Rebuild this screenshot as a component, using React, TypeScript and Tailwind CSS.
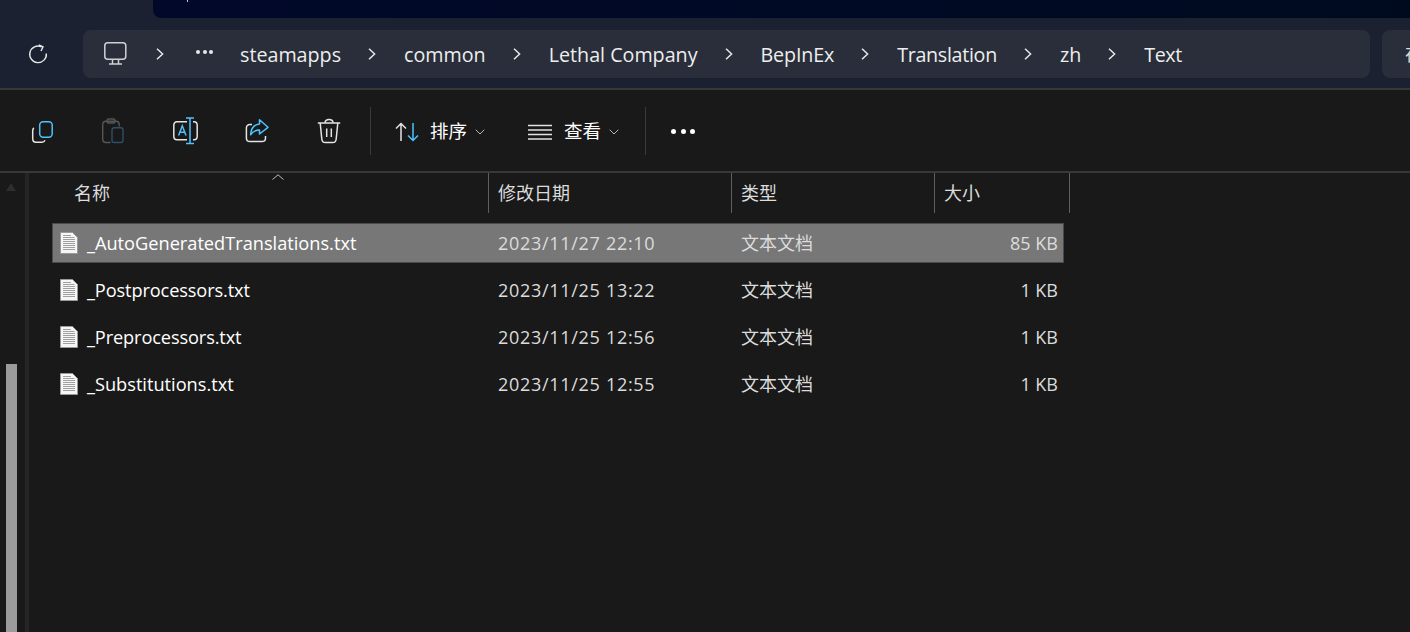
import { ChevronDown } from 'lucide-react';

const crumbs = [
  { label: 'steamapps', tracking: '' },
  { label: 'common', tracking: '' },
  { label: 'Lethal Company', tracking: '' },
  { label: 'BepInEx', tracking: 'tracking-[-0.15px]' },
  { label: 'Translation', tracking: 'tracking-[-0.3px]' },
  { label: 'zh', tracking: '' },
  { label: 'Text', tracking: 'tracking-[-0.4px]' },
];

const files = [
  { name: '_AutoGeneratedTranslations.txt', date: '2023/11/27 22:10', size: '85 KB', selected: true, tracking: '' },
  { name: '_Postprocessors.txt', date: '2023/11/25 13:22', size: '1 KB', selected: false, tracking: 'tracking-[-0.12px]' },
  { name: '_Preprocessors.txt', date: '2023/11/25 12:56', size: '1 KB', selected: false, tracking: 'tracking-[-0.12px]' },
  { name: '_Substitutions.txt', date: '2023/11/25 12:55', size: '1 KB', selected: false, tracking: '' },
];

const BLUE = '#4cc2ff';
const WHITE = '#e4e4e4';

function CopyIcon() {
  return (
    <svg width="24" height="26" viewBox="0 0 24 26" fill="none" strokeWidth="1.5">
      <path d="M5 10 C4 10.5 3.7 11.5 3.7 12.5 V20.5 C3.7 23 5 24.3 7 24.3 H13 C14.5 24.3 15.5 23.5 16 22.3" stroke={WHITE} />
      <rect x="10.7" y="3.7" width="12.5" height="15.5" rx="3.4" stroke={BLUE} />
    </svg>
  );
}

function PasteIcon() {
  return (
    <svg width="24" height="26" viewBox="0 0 24 26" fill="none" strokeWidth="1.4">
      <path d="M9.5 24.5 H5 C3 24.5 1.7 23.2 1.7 21 V6.5 C1.7 4.5 3 3.2 5 3.2 H15 C17 3.2 18.2 4.5 18.2 6.5 V8.5" stroke="#565656" />
      <rect x="6" y="1" width="8" height="4" rx="1.5" stroke="#565656" />
      <rect x="11" y="9.7" width="11" height="14.8" rx="2.2" stroke="#2b5068" />
    </svg>
  );
}

function RenameIcon() {
  return (
    <svg width="26" height="28" viewBox="0 0 26 28" fill="none" strokeWidth="1.5">
      <path d="M15 4.7 H5 C3 4.7 1.8 6.1 1.8 8.2 V19.2 C1.8 21.3 3 22.7 5 22.7 H15" stroke={WHITE} />
      <path d="M21 4.7 H22 C24 4.7 25.2 6.1 25.2 8.2 V19.2 C25.2 21.3 24 22.7 22 22.7 H21" stroke={WHITE} />
      <path d="M14 1 H22 M18 1 V26.5 M14 26.5 H22" stroke={BLUE} />
      <path d="M6.6 18.5 L10.3 8.8 L14 18.5 M7.8 15.3 H12.8" stroke={BLUE} />
    </svg>
  );
}

function ShareIcon() {
  return (
    <svg width="24" height="26" viewBox="0 0 24 26" fill="none" strokeWidth="1.5">
      <path d="M7 6.5 H5 C2.7 6.5 1.4 7.9 1.4 10 V20 C1.4 22.2 2.7 23.6 5 23.6 H17 C19.2 23.6 20.5 22.2 20.5 20 V18" stroke={WHITE} />
      <path d="M14.5 1.8 L23 9.3 L14.5 16 V12 C10.5 12 7.7 13.4 5.6 16.8 C6 10.5 9.5 6.5 14.5 6 Z" stroke={BLUE} strokeLinejoin="round" />
    </svg>
  );
}

function TrashIcon() {
  return (
    <svg width="24" height="26" viewBox="0 0 24 26" fill="none" strokeWidth="1.5" stroke={WHITE}>
      <path d="M.8 5 H23.2" />
      <path d="M8 4.8 C8 2.8 9.7 1.4 12 1.4 C14.3 1.4 16 2.8 16 4.8" />
      <path d="M3.2 5 L4.8 21 C5 23.3 6.3 24.6 8.4 24.6 H15.6 C17.7 24.6 19 23.3 19.2 21 L20.8 5" />
      <path d="M9.7 10.5 V19 M14.3 10.5 V19" />
    </svg>
  );
}

function SortIcon() {
  return (
    <svg width="24" height="20" viewBox="0 0 24 20" fill="none" strokeWidth="1.5">
      <path d="M6 19 V1.5 M1 6.5 L6 1.5 L11 6.5" stroke={WHITE} />
      <path d="M18 1 V18.5 M13 13.5 L18 18.5 L23 13.5" stroke={BLUE} />
    </svg>
  );
}

function ListIcon() {
  return (
    <svg width="24" height="16" viewBox="0 0 24 16" fill="none" strokeWidth="1.3" stroke={WHITE}>
      <path d="M0 1.5 H24 M0 6 H24 M0 10.5 H24 M0 15 H24" />
    </svg>
  );
}

function MonitorIcon() {
  return (
    <svg width="24" height="24" viewBox="0 0 24 24" fill="none" strokeWidth="1.5" stroke="#cfd0d3">
      <rect x=".8" y=".8" width="21" height="16.5" rx="3" />
      <path d="M8.5 17.5 V21.5 M14.5 17.5 V21.5 M5 22 H18" />
    </svg>
  );
}

function RefreshIcon() {
  return (
    <svg width="20" height="20" viewBox="0 0 20 20" fill="none" strokeWidth="1.4" stroke="#e8e8e8">
      <path d="M13.5 2.8 A8.3 8.3 0 1 0 18.3 9.5" />
      <path d="M10.8 1 L15 2.8 L13 7" />
    </svg>
  );
}

function FileIcon() {
  return (
    <svg width="18" height="22" viewBox="0 0 18 22">
      <path d="M.5 .5 H12.5 L17.5 5.5 V21.5 H.5 Z" fill="#f6f6f6" stroke="#9a9a9a" />
      <path d="M3 3.5 H11 M3 5.5 H14.5 M3 7.5 H15 M3 9.5 H15 M3 11.5 H15 M3 13.5 H15 M3 15.5 H15 M3 17.5 H15" stroke="#a0a0a0" strokeWidth="1" />
    </svg>
  );
}

function CrumbChevron({ className }: { className: string }) {
  return (
    <svg width="8" height="12" viewBox="0 0 8 12" fill="none" stroke="#e8e8e8" strokeWidth="1.5" className={className}>
      <path d="M1 .7 L6.6 6 L1 11.3" />
    </svg>
  );
}

function ToolButton({ children }: { children: React.ReactNode }) {
  return <div className="flex h-full w-[72px] items-center justify-center">{children}</div>;
}

export default function App() {
  return (
    <div
      className="flex h-[632px] w-[1410px] flex-col overflow-hidden bg-[#191919] text-white"
      style={{ fontFamily: '"Open Sans", "Noto Sans CJK SC", sans-serif' }}
    >
      {/* address bar area */}
      <div className="h-[88px] shrink-0 bg-[#1b2130]">
        <div className="ml-[153px] h-[18px] rounded-bl-lg bg-linear-to-r from-[#01082a] to-[#000a1f]">
          <div className="ml-[34px] h-[2px] w-[1px] bg-white/80" />
        </div>
        <div className="mt-[12px] flex h-[48px] items-center">
          <div className="flex w-[83px] shrink-0 justify-center pr-[7px]">
            <RefreshIcon />
          </div>
          <div className="flex h-full w-[1287px] shrink-0 items-center rounded-lg bg-[#292e3a] pl-[21px]">
            <MonitorIcon />
            <CrumbChevron className="ml-[28px]" />
            <div className="mb-[4px] ml-[32px] flex gap-[2.5px]">
              <span className="size-[4px] rounded-full bg-[#e8e8e8]" />
              <span className="size-[4px] rounded-full bg-[#e8e8e8]" />
              <span className="size-[4px] rounded-full bg-[#e8e8e8]" />
            </div>
            {crumbs.map((crumb, i) => (
              <div key={crumb.label} className="flex items-center">
                {i > 0 && <CrumbChevron className="ml-[27px] mr-[28px]" />}
                <span className={`pt-[2px] text-[19.7px] leading-none text-[#eeeeee] ${crumb.tracking} ${i === 0 ? 'ml-[27px]' : ''}`}>
                  {crumb.label}
                </span>
              </div>
            ))}
          </div>
          <div className="ml-[12px] flex h-full w-[120px] shrink-0 items-center rounded-lg bg-[#292e3a] pl-[23px] text-[18px] text-[#dddddd]">
            在
          </div>
        </div>
      </div>

      {/* command bar */}
      <div className="flex h-[85px] shrink-0 items-center border-y-2 border-[#383838] pl-[5px]">
        <ToolButton><CopyIcon /></ToolButton>
        <ToolButton><PasteIcon /></ToolButton>
        <ToolButton><RenameIcon /></ToolButton>
        <ToolButton><ShareIcon /></ToolButton>
        <ToolButton><TrashIcon /></ToolButton>
        <div className="ml-[5px] h-[48px] w-[1px] bg-[#3a3a3a]" />
        <div className="ml-[24px] flex items-center pt-[2px]">
          <SortIcon />
          <span className="ml-[11px] text-[18.5px] leading-none">排序</span>
          <ChevronDown size={16} strokeWidth={1.5} className="ml-[5px] text-[#b8b8b8]" />
        </div>
        <div className="ml-[40px] flex items-center pt-[2px]">
          <ListIcon />
          <span className="ml-[12px] text-[18.5px] leading-none">查看</span>
          <ChevronDown size={16} strokeWidth={1.5} className="ml-[5px] text-[#b8b8b8]" />
        </div>
        <div className="ml-[23px] h-[48px] w-[1px] bg-[#3a3a3a]" />
        <div className="ml-[25px] mt-[2px] flex gap-[4.5px]">
          <span className="size-[5px] rounded-full bg-white" />
          <span className="size-[5px] rounded-full bg-white" />
          <span className="size-[5px] rounded-full bg-white" />
        </div>
      </div>

      {/* content */}
      <div className="flex min-h-0 flex-1">
        {/* nav pane scrollbar */}
        <div className="flex w-[25px] shrink-0 flex-col items-center pr-[3px]">
          <div className="mt-[10px] h-0 w-0 border-x-[5.5px] border-b-[8px] border-x-transparent border-b-[#2e2e2e]" />
          <div className="mt-[173px] h-[268px] w-[11px] bg-[#9b9b9b]" />
        </div>
        <div className="w-[4px] shrink-0 bg-[#252525]" />

        <div className="min-w-0 flex-1">
          {/* column headers */}
          <div className="relative flex h-[40px] text-[18px] text-[#dcdcdc]">
            <svg width="12" height="6" viewBox="0 0 12 6" fill="none" stroke="#bdbdbd" className="absolute left-[243px] top-[1px]">
              <path d="M.5 5.5 L6 .8 L11.5 5.5" />
            </svg>
            <div className="flex w-[460px] items-center border-r border-[#5e5e5e] pl-[45px]">名称</div>
            <div className="flex w-[243px] items-center border-r border-[#5e5e5e] pl-[9px]">修改日期</div>
            <div className="flex w-[203px] items-center border-r border-[#5e5e5e] pl-[9px]">类型</div>
            <div className="flex w-[135px] items-center border-r border-[#5e5e5e] pl-[9px]">大小</div>
          </div>

          {/* rows */}
          <div className="ml-[23px] mt-[10px] flex w-[1012px] flex-col gap-[7px]">
            {files.map((file) => (
              <div
                key={file.name}
                className={`grid h-[40px] grid-cols-[438px_243px_175px_1fr] items-center border pl-[7px] pr-[5px] text-[18px] ${
                  file.selected ? 'border-[#4a4a4a] bg-[#777777]' : 'border-transparent'
                }`}
              >
                <div className="flex items-center gap-[9px] text-white">
                  <FileIcon />
                  <span className={`pt-[1px] text-[18.2px] ${file.tracking}`}>{file.name}</span>
                </div>
                <span className="tracking-[0.7px] text-[#dcdcdc]">{file.date}</span>
                <span className="text-[#dcdcdc]">文本文档</span>
                <span className="text-right text-[#dcdcdc]">{file.size}</span>
              </div>
            ))}
          </div>
        </div>
      </div>
    </div>
  );
}
